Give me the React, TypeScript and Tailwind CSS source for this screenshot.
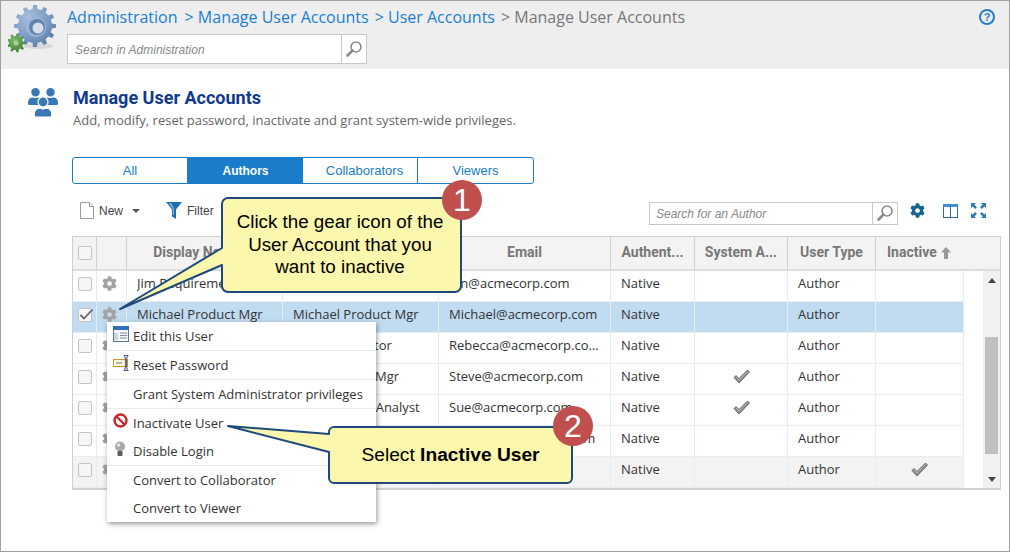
import { FaCog, FaUser } from "react-icons/fa";

const openSans = "font-['Open_Sans',sans-serif]";

// gear outline used by the big logo
const gearPath = (cx: number, cy: number, outer: number, inner: number, teeth: number) => {
  const pts: string[] = [];
  for (let i = 0; i < teeth; i++) {
    const a = (i / teeth) * Math.PI * 2;
    const step = (Math.PI * 2) / teeth;
    const list: [number, number][] = [
      [inner, a - step * 0.5],
      [inner, a - step * 0.28],
      [outer, a - step * 0.17],
      [outer, a + step * 0.17],
      [inner, a + step * 0.28],
    ];
    list.forEach(([r, t]) => pts.push(`${(cx + r * Math.cos(t)).toFixed(2)} ${(cy + r * Math.sin(t)).toFixed(2)}`));
  }
  return `M${pts.join("L")}Z`;
};

const Logo = () => (
  <svg width="50" height="50" viewBox="0 0 50 50" className="shrink-0">
    <defs>
      <radialGradient id="bluegear" cx="35%" cy="30%" r="80%">
        <stop offset="0" stopColor="#a9bfdc" />
        <stop offset="0.6" stopColor="#7a99c4" />
        <stop offset="1" stopColor="#56789f" />
      </radialGradient>
      <radialGradient id="greengear" cx="40%" cy="35%" r="70%">
        <stop offset="0" stopColor="#7fb86a" />
        <stop offset="1" stopColor="#3a7f34" />
      </radialGradient>
    </defs>
    <ellipse cx="30" cy="41" rx="15" ry="3" fill="#d8d8d8" />
    <path d={gearPath(27, 21, 21, 17, 12)} fill="url(#bluegear)" />
    <circle cx="28" cy="22" r="10" fill="#9db5d4" />
    <circle cx="29" cy="22" r="8" fill="#5f82b0" />
    <circle cx="30" cy="23" r="5.500" fill="#d5dde8" />
    <path d={gearPath(8, 38, 9.5, 7, 9)} fill="url(#greengear)" />
    <circle cx="8" cy="38" r="2.500" fill="#a9d193" />
  </svg>
);

const Magnifier = () => (
  <svg width="18" height="18" viewBox="0 0 18 18">
    <circle cx="11" cy="7" r="5" fill="none" stroke="#8a8a8a" strokeWidth="1.6" />
    <path d="M7.5 10.5 2.5 15.5" stroke="#8a8a8a" strokeWidth="2.6" strokeLinecap="round" />
  </svg>
);

const NewIcon = () => (
  <svg width="14" height="17" viewBox="0 0 14 17">
    <path d="M.5.5h9l4 4v12H.5z" fill="#fff" stroke="#9a9a9a" />
    <path d="M9.5.5v4h4" fill="#eee" stroke="#9a9a9a" />
  </svg>
);

const FilterIcon = () => (
  <svg width="16" height="17" viewBox="0 0 16 17">
    <path d="M0 0h16L10 7.5V17L6 14.5V7.5z" fill="#1f6fae" />
    <path d="M2.5 1.2h3L8 7v6L6.8 12.4V7z" fill="#7fb2d8" />
  </svg>
);

const ColumnsIcon = () => (
  <svg width="15" height="14" viewBox="0 0 15 14">
    <rect x=".5" y=".5" width="14" height="13" fill="#fff" stroke="#2d6da3" />
    <rect x="0" y="0" width="15" height="3" fill="#3d8fdc" />
    <path d="M7.5 1v12" stroke="#2d6da3" />
  </svg>
);

const ExpandIcon = () => (
  <svg width="15" height="15" viewBox="0 0 15 15" fill="#2c7cb8">
    <path d="M0 0h5L3.4 1.6 6 4.2 4.2 6 1.6 3.4 0 5zM15 0v5l-1.6-1.6L10.8 6 9 4.2l2.6-2.6L10 0zM0 15v-5l1.6 1.6L4.2 9 6 10.8l-2.6 2.6L5 15zM15 15h-5l1.6-1.6L9 10.8 10.8 9l2.6 2.6L15 10z" />
  </svg>
);

const Check = () => (
  <svg width="17" height="15" viewBox="0 0 17 15">
    <path d="M1 8.500 3 6.500 6 9.500 14.500 1 16.500 3 6 14z" fill="#8c8c8c" stroke="#5a5a5a" strokeWidth=".8" />
    <path d="M3 8 6 11 14.500 2.500" fill="none" stroke="#d0d0d0" strokeWidth=".6" />
  </svg>
);

const Box = ({ checked }: { checked?: boolean }) => (
  <div className="relative h-[14px] w-[14px] rounded-[2px] border border-[#c4c4c4] bg-[#f6f6f6]">
    {checked && (
      <svg width="15" height="13" viewBox="0 0 15 13" className="absolute -top-[1px] left-0">
        <path d="M1.500 7 5 10.500 13.500 1.500" fill="none" stroke="#666" strokeWidth="1.800" />
      </svg>
    )}
  </div>
);

const EditIcon = () => (
  <svg width="16" height="16" viewBox="0 0 16 16">
    <rect x=".5" y=".5" width="15" height="15" fill="#f4f6f8" stroke="#5c7591" />
    <rect x="0" y="0" width="16" height="4" fill="#2e6fc0" />
    <path d="M1 7h4v7H1z" fill="#c7d4e2" />
    <path d="M7 7h7M7 9.500h7M7 12h7" stroke="#7b8da0" />
  </svg>
);

const ResetIcon = () => (
  <svg width="16" height="16" viewBox="0 0 16 16">
    <rect x=".5" y="4.500" width="14" height="7" fill="#fbf3dc" stroke="#c9962a" />
    <path d="M3 8h6" stroke="#777" />
    <path d="M10.500.5h5M10.500 15.500h5M11.500 1 12.500 4V12L11.500 15M14.500 1 13.500 4V12L14.500 15" fill="none" stroke="#5c6480" strokeWidth="1.100" />
  </svg>
);

const NoIcon = () => (
  <svg width="15" height="15" viewBox="0 0 15 15">
    <circle cx="7.500" cy="7.500" r="6" fill="#fff" stroke="#c8242f" strokeWidth="2.400" />
    <path d="M3.500 3.500 11.500 11.500" stroke="#c8242f" strokeWidth="2.400" />
  </svg>
);

const BulbIcon = () => (
  <svg width="14" height="16" viewBox="0 0 14 16">
    <circle cx="7" cy="5.500" r="5" fill="#a9a9a9" />
    <circle cx="5.500" cy="4" r="1.800" fill="#e4e4e4" />
    <rect x="4.500" y="10" width="5" height="5" rx="1" fill="#5a5a5a" />
  </svg>
);

const cols = [
  "w-[24px]",
  "w-[30px]",
  "w-[156px]",
  "w-[156px]",
  "w-[172px]",
  "w-[84px]",
  "w-[93px]",
  "w-[88px]",
  "w-[88px]",
];

const headers = ["Display Name", "", "Email", "Authent...", "System A...", "User Type"];

type Row = { id: number; name?: string; login?: string; email?: string; sys?: boolean; inactive?: boolean; selected?: boolean; shaded?: boolean };

// cells that sit fully under the menu or the callouts stay empty
const rows: Row[] = [
  { id: 1, name: "Jim Requirements Mgr", email: "Jon@acmecorp.com" },
  { id: 2, name: "Michael Product Mgr", login: "Michael Product Mgr", email: "Michael@acmecorp.com", selected: true },
  { id: 3, login: "Rebecca Auditor", email: "Rebecca@acmecorp.com" },
  { id: 4, login: "Steve Project Mgr", email: "Steve@acmecorp.com", sys: true },
  { id: 5, login: "Sue Business Analyst", email: "Sue@acmecorp.com", sys: true },
  { id: 6, email: "Samuel@acmecorp.com" },
  { id: 7, inactive: true, shaded: true },
];

const Cell = ({ w, className, children }: { w: string; className?: string; children?: React.ReactNode }) => (
  <div className={`${w} flex h-full shrink-0 items-center border-r border-[#e3edf5] pb-[5px] ${className ?? ""}`}>{children}</div>
);

const Grid = () => (
  <div className="w-[929px] border border-[#d0d0d0] border-b-2">
    <div className="flex h-[34px] border-b-2 border-[#dcdcdc] bg-[#f3f3f3] pb-0 text-[14px] font-bold text-[#777] font-['Roboto',sans-serif]">
      <div className={`${cols[0]} flex shrink-0 items-center justify-center border-r border-[#d0d0d0]`}>
        <Box />
      </div>
      <div className={`${cols[1]} shrink-0 border-r border-[#d0d0d0]`} />
      {headers.map((h, i) => (
        <div key={i} className={`${cols[i + 2]} ${i === 0 ? "pr-[16px]" : ""} flex shrink-0 items-center justify-center border-r border-[#d0d0d0] pb-[1px]`}>
          {h}
        </div>
      ))}
      <div className="flex flex-1 items-center gap-[4px] pb-[1px] pl-[11px]">
        Inactive
        <svg width="10" height="12" viewBox="0 0 10 12">
          <path d="M5 0 10 5.500H7V12H3V5.500H0z" fill="#999" />
        </svg>
      </div>
    </div>
    <div className={`flex text-[13px] text-[#333] ${openSans}`}>
      <div className="flex-none">
        {rows.map((r) => (
          <div
            key={r.id}
            className={`flex h-[31px] w-[891px] border-b border-[#e8edf1] ${r.selected ? "bg-[#c1dbf1]" : r.shaded ? "bg-[#f3f3f3]" : "bg-white"}`}
          >
            <Cell w={cols[0]} className="justify-center">
              <Box checked={r.selected} />
            </Cell>
            <Cell w={cols[1]} className="justify-center pr-[5px]">
              <FaCog className="text-[15px] text-[#a3a3a3]" />
            </Cell>
            <Cell w={cols[2]} className="pl-[10px]">
              <span className="truncate">{r.name}</span>
            </Cell>
            <Cell w={cols[3]} className="pl-[10px]">
              <span className="truncate">{r.login}</span>
            </Cell>
            <Cell w={cols[4]} className="pl-[10px] pr-[10px]">
              <span className="truncate">{r.email}</span>
            </Cell>
            <Cell w={cols[5]} className="pl-[10px]">
              Native
            </Cell>
            <Cell w={cols[6]} className="justify-center">
              {r.sys && <Check />}
            </Cell>
            <Cell w={cols[7]} className="pl-[10px]">
              Author
            </Cell>
            <Cell w={cols[8]} className="justify-center">
              {r.inactive && <Check />}
            </Cell>
          </div>
        ))}
      </div>
      <div className="flex-1 bg-white" />
      <div className="flex w-[17px] flex-col items-center bg-[#f1f1f1]">
        <div className="flex h-[18px] items-center justify-center">
          <div className="h-0 w-0 border-x-[4px] border-b-[5px] border-x-transparent border-b-[#444]" />
        </div>
        <div className="h-[48px]" />
        <div className="h-[117px] w-[13px] bg-[#c0c0c0]" />
        <div className="flex flex-1 items-center justify-center pt-[16px]">
          <div className="h-0 w-0 border-x-[4px] border-t-[5px] border-x-transparent border-t-[#444]" />
        </div>
      </div>
    </div>
  </div>
);

const menu: { label: string; icon?: React.ReactNode; line?: boolean; h: string }[] = [
  { label: "Edit this User", icon: <EditIcon />, line: true, h: "h-[29px]" },
  { label: "Reset Password", icon: <ResetIcon />, line: true, h: "h-[29px]" },
  { label: "Grant System Administrator privileges", line: true, h: "h-[29px]" },
  { label: "Inactivate User", icon: <NoIcon />, h: "h-[28px]" },
  { label: "Disable Login", icon: <BulbIcon />, line: true, h: "h-[29px]" },
  { label: "Convert to Collaborator", h: "h-[28px]" },
  { label: "Convert to Viewer", h: "h-[28px]" },
];

const Menu = () => (
  <div className={`absolute left-[106px] top-[321px] w-[269px] bg-white text-[13px] text-[#333] shadow-[1px_2px_5px_rgba(0,0,0,0.4)] ${openSans}`}>
    {menu.map((m) => (
      <div key={m.label} className={`relative flex items-center pl-[26px] pt-[2px] ${m.h} ${m.line ? "border-b border-[#e8e8e8]" : ""}`}>
        {m.icon && <div className="absolute left-[6px] top-[4px]">{m.icon}</div>}
        {m.label}
      </div>
    ))}
  </div>
);

const CalloutShape = ({ d, w, h, className }: { d: string; w: number; h: number; className: string }) => (
  <svg width={w} height={h} viewBox={`0 0 ${w} ${h}`} className={`absolute ${className}`}>
    <path d={d} fill="#fbf7ac" stroke="#1f497d" strokeWidth="2" strokeLinejoin="round" />
  </svg>
);

const Badge = ({ n, className }: { n: number; className: string }) => (
  <div className={`absolute flex h-[40px] w-[40px] items-center justify-center rounded-full bg-[#c0504d] font-['Liberation_Sans',sans-serif] text-[32px] text-white ${className}`}>
    {n}
  </div>
);

export default function App() {
  return (
    <div className="relative h-[552px] w-[1010px] overflow-hidden border border-[#a0a0a0] bg-white font-['Liberation_Sans',sans-serif]">
      <div className="flex h-[68px] items-start bg-[#eeeeee]">
        <div className="ml-[7px] mt-[4px]">
          <Logo />
        </div>
        <div className="ml-[9px] flex-1">
          <div className={`mt-[4px] flex h-[24px] items-center text-[16px] text-[#1a7fd4] ${openSans}`}>
            <span>Administration</span>
            <span className="ml-[7px]">&gt; Manage User Accounts</span>
            <span className="ml-[6px]">&gt; User Accounts</span>
            <span className="ml-[6px] text-[#777]">&gt; Manage User Accounts</span>
          </div>
          <div className="mt-[5px] flex h-[30px] w-[300px] border border-[#c8c8c8] bg-white">
            <div className="flex flex-1 items-center pl-[7px] pt-[1px] text-[12px] italic text-[#888]">Search in Administration</div>
            <div className="flex w-[25px] items-center justify-center border-l border-[#c8c8c8]">
              <Magnifier />
            </div>
          </div>
        </div>
        <div className="mr-[14px] mt-[8px] flex h-[16px] w-[16px] items-center justify-center rounded-full border-2 border-[#2c7cc4] text-[11px] font-bold leading-none text-[#2c7cc4]">
          ?
        </div>
      </div>

      <div className="flex pl-[27px] pt-[18px]">
        <div className="relative mt-[1px] h-[30px] w-[31px]">
          <FaUser className="absolute -left-[1px] top-0 text-[17px] text-[#3a78b5]" />
          <FaUser className="absolute right-0 top-0 text-[17px] text-[#3a78b5]" />
          <FaUser className="absolute left-[5px] top-[9px] text-[20px] text-[#3a78b5] stroke-white stroke-[30px]" />
        </div>
        <div className="ml-[14px]">
          <div className="h-[22px] font-['Roboto',sans-serif] text-[18px] font-bold leading-[22px] text-[#0f3a8e]">Manage User Accounts</div>
          <div className={`mt-[1px] text-[13px] leading-[20px] text-[#666] ${openSans}`}>
            Add, modify, reset password, inactivate and grant system-wide privileges.
          </div>
        </div>
      </div>

      <div className="ml-[71px] mt-[27px] flex h-[27px] w-[462px] overflow-hidden rounded-[3px] border border-[#1a7dc9] text-[13px] text-[#1a7dc9]">
        <div className="flex w-[115px] items-center justify-center border-r border-[#1a7dc9]">All</div>
        <div className="flex w-[115px] items-center justify-center bg-[#1a7dc9] text-[12px] font-bold text-white">Authors</div>
        <div className="flex w-[115px] items-center justify-center border-r border-[#1a7dc9] pl-[9px]">Collaborators</div>
        <div className="flex flex-1 items-center justify-center">Viewers</div>
      </div>

      <div className="ml-[79px] mt-[17px] flex h-[24px] items-center pr-[23px] text-[12px] text-[#444]">
        <div className="flex items-center pb-[5px]">
          <NewIcon />
          <span className="ml-[5px]">New</span>
          <div className="ml-[9px] h-0 w-0 border-x-[4px] border-t-[4px] border-x-transparent border-t-[#555]" />
          <div className="ml-[26px]">
            <FilterIcon />
          </div>
          <span className="ml-[5px]">Filter</span>
        </div>
        <div className="ml-auto flex h-[23px] w-[249px] border border-[#c8c8c8] bg-white">
          <div className="flex flex-1 items-center pl-[6px] pt-[1px] italic text-[#888]">Search for an Author</div>
          <div className="flex w-[25px] items-center justify-center border-l border-[#c8c8c8]">
            <Magnifier />
          </div>
        </div>
        <div className="flex items-center pb-[5px]">
          <FaCog className="ml-[12px] text-[15px] text-[#17648f]" />
          <div className="ml-[18px] flex">
            <ColumnsIcon />
          </div>
          <div className="ml-[13px] flex">
            <ExpandIcon />
          </div>
        </div>
      </div>

      <div className="ml-[71px] mt-[11px]">
        <Grid />
      </div>

      <Menu />

      <CalloutShape
        w={360}
        h={120}
        className="left-[109px] top-[190px]"
        d="M118 7h227a6 6 0 0 1 6 6v82a6 6 0 0 1-6 6H118a6 6 0 0 1-6-6V74L10 118 112 57V13a6 6 0 0 1 6-6z"
      />
      <div className="absolute left-[223px] top-[210px] w-[232px] text-center text-[18.8px] leading-[22.5px] text-black">
        Click the gear icon of the
        <br />
        User Account that you
        <br />
        want to inactive
      </div>
      <Badge n={1} className="left-[441px] top-[179px]" />

      <CalloutShape
        w={360}
        h={70}
        className="left-[220px] top-[420px]"
        d="M113 6h233a5 5 0 0 1 5 5v46a5 5 0 0 1-5 5H113a5 5 0 0 1-5-5V31L7 5 108 13V11a5 5 0 0 1 5-5z"
      />
      <div className="absolute left-[328px] top-[442px] w-[243px] text-center text-[19.2px] leading-[24px] text-black">
        Select <b>Inactive User</b>
      </div>
      <Badge n={2} className="left-[552px] top-[405px]" />
    </div>
  );
}
